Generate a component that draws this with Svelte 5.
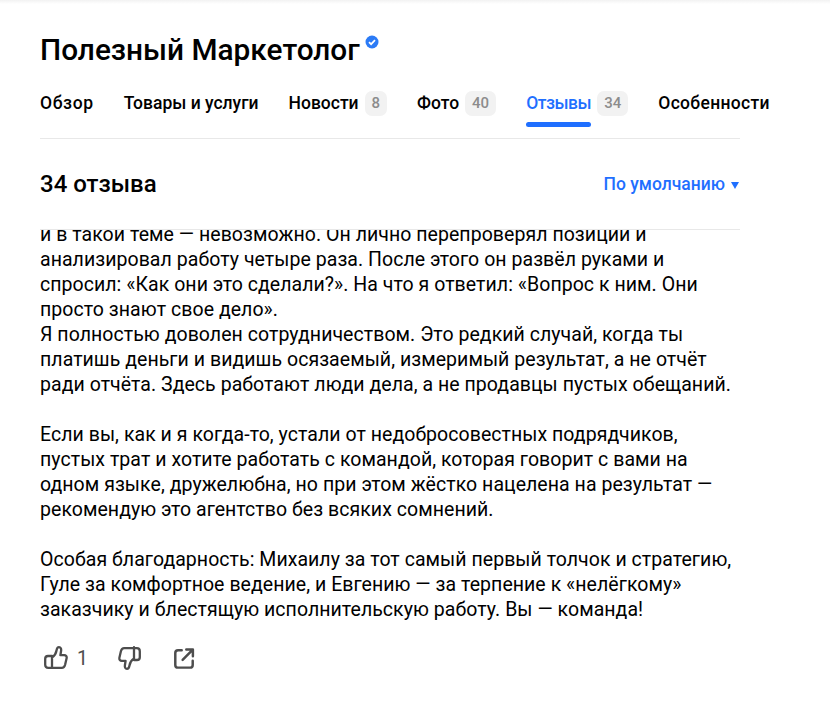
<script>
    let tabs = [
        { name: "Обзор" },
        { name: "Товары и услуги" },
        { name: "Новости", count: 8 },
        { name: "Фото", count: 40 },
        { name: "Отзывы", count: 34, active: true },
        { name: "Особенности" }
    ]

    let paragraphs = [
        ["и в такой теме — невозможно. Он лично перепроверял позиции и", "анализировал работу четыре раза. После этого он развёл руками и", "спросил: «Как они это сделали?». На что я ответил: «Вопрос к ним. Они", "просто знают свое дело».", "Я полностью доволен сотрудничеством. Это редкий случай, когда ты", "платишь деньги и видишь осязаемый, измеримый результат, а не отчёт", "ради отчёта. Здесь работают люди дела, а не продавцы пустых обещаний."],
        ["Если вы, как и я когда-то, устали от недобросовестных подрядчиков,", "пустых трат и хотите работать с командой, которая говорит с вами на", "одном языке, дружелюбна, но при этом жёстко нацелена на результат —", "рекомендую это агентство без всяких сомнений."],
        ["Особая благодарность: Михаилу за тот самый первый толчок и стратегию,", "Гуле за комфортное ведение, и Евгению — за терпение к «нелёгкому»", "заказчику и блестящую исполнительскую работу. Вы — команда!"]
    ]
</script>

<div class="page">
    <h1>
        Полезный Маркетолог
        <svg class="verified" width="14" height="14" viewBox="0 0 14 14">
            <circle cx="7" cy="7" r="6.5" fill="#2b7bf6" />
            <path d="M4 7.2l2.1 2L10 5.2" fill="none" stroke="#fff" stroke-width="1.7" />
        </svg>
    </h1>

    <nav>
        {#each tabs as tab}
            <div class="tab {tab.active ? "active" : ""}">
                <span class="tabName">{tab.name}</span>
                {#if tab.count}
                    <span class="count">{tab.count}</span>
                {/if}
            </div>
        {/each}
    </nav>

    <div class="header">
        <h2>34 отзыва</h2>
        <div class="sort">По умолчанию<span class="arrow"></span></div>
    </div>

    <div class="reviewBody">
        <div class="text">
            {#each paragraphs as lines}
                <p>
                    {#each lines as line}
                        <span>{line}</span>
                    {/each}
                </p>
            {/each}
        </div>
    </div>

    <div class="actions">
        <div class="action like">
            <svg width="24" height="24" viewBox="0 0 24 24" fill="none" stroke="#4d4d4d" stroke-width="2.3" stroke-linejoin="round" stroke-linecap="round">
                <path d="M8 11.500c2.500-1.500 4-4 4.500-7 .3-1.800 1-3.300 2.500-3.300 1.700 0 2.400 1.800 2.100 3.600l-.7 4.400h3.800c1.700 0 2.800 1.300 2.400 3l-1.500 6.500c-.4 1.500-1.500 3.100-3.300 3.100H4.200c-1.700 0-3-1.200-3-3v-6c0-1.500 1.200-2.800 2.800-2.800h4v11.800" />
            </svg>
            <span class="likes">1</span>
        </div>
        <div class="action dislike">
            <svg width="24" height="24" viewBox="0 0 24 24" fill="none" stroke="#4d4d4d" stroke-width="2.3" stroke-linejoin="round" stroke-linecap="round">
                <path d="M17 12.500c-2.500 1.500-4 4-4.500 7-.3 1.800-1 3.300-2.500 3.300-1.700 0-2.400-1.800-2.100-3.600l.7-4.400H4.800c-1.700 0-2.800-1.300-2.400-3l1.500-6.500c.4-1.500 1.500-3.100 3.300-3.100h12.600c1.700 0 3 1.200 3 3v6c0 1.500-1.200 2.800-2.800 2.800h-3V1.200" />
            </svg>
        </div>
        <div class="action">
            <svg width="22" height="22" viewBox="0 0 24 24" fill="none" stroke="#4d4d4d" stroke-width="2.7" stroke-linejoin="round" stroke-linecap="round">
                <path d="M9.500 3.500H5.500a3 3 0 0 0-3 3v13a3 3 0 0 0 3 3h13a3 3 0 0 0 3-3V15" />
                <path d="M10.500 14L21 3.500M14.500 2.800H21.700V10" />
            </svg>
        </div>
    </div>
</div>

<style>
    :global(body) {
        margin: 0;
        background: white;
    }

    .page {
        box-sizing: border-box;
        width: 830px;
        height: 709px;
        overflow: hidden;
        padding: 0 90px 0 40px;
        font-family: Roboto, "Noto Sans", sans-serif;
        color: black;
        background: linear-gradient(#f2f2f2, white 4px);
    }

    h1 {
        margin: 0;
        padding-top: 32px;
        font-size: 29.8px;
        line-height: 36px;
        font-weight: 500;
        white-space: nowrap;
    }

    .verified {
        vertical-align: 11px;
        margin-left: -2px;
    }

    nav {
        display: flex;
        gap: 30px;
        margin-top: 23px;
        height: 47px;
        border-bottom: 1px solid #e8e8e8;
        white-space: nowrap;
    }

    .tab {
        display: flex;
        align-items: flex-start;
        gap: 6px;
        font-size: 17.5px;
        font-weight: 500;
        line-height: 25px;
    }

    .tab:first-child {
        letter-spacing: 0.6px;
    }

    .tab:last-child {
        letter-spacing: 0.3px;
    }

    .tabName {
        position: relative;
    }

    .active {
        color: #1f6fff;
        letter-spacing: -0.45px;
    }

    .active .tabName::after {
        content: "";
        position: absolute;
        left: 0;
        right: 0;
        top: 31px;
        height: 5px;
        background: #1f6fff;
        border-radius: 3px;
    }

    .count {
        background: #f2f2f2;
        color: #8c8c8c;
        font-size: 15px;
        line-height: 25px;
        padding: 0 7px;
        border-radius: 7px;
        letter-spacing: 0;
    }

    .header {
        display: flex;
        justify-content: space-between;
        align-items: center;
        height: 91px;
        border-bottom: 1px solid #e8e8e8;
        box-sizing: border-box;
    }

    h2 {
        margin: 0;
        font-size: 24px;
        font-weight: 500;
    }

    .sort {
        color: #1f6fff;
        font-size: 17.5px;
        font-weight: 500;
    }

    .arrow {
        display: inline-block;
        margin: 0 1px 0 6px;
        border: 4px solid transparent;
        border-top: 7px solid #1f6fff;
        border-bottom: 0;
        vertical-align: 1px;
    }

    .reviewBody {
        height: 401px;
        margin-right: -60px;
        overflow: hidden;
    }

    .text {
        margin-top: -8px;
        font-size: 19.5px;
        line-height: 25px;
        letter-spacing: 0.05px;
        white-space: nowrap;
    }

    p {
        margin: 0 0 25px;
    }

    p span {
        display: block;
    }

    .actions {
        display: flex;
        align-items: center;
        margin-top: 15px;
        padding-left: 4px;
    }

    .action {
        display: flex;
        align-items: center;
        gap: 9px;
    }

    .like {
        margin-right: 29px;
    }

    .dislike {
        margin-right: 32px;
    }

    .likes {
        font-size: 19.5px;
        color: #4d4d4d;
    }
</style>
